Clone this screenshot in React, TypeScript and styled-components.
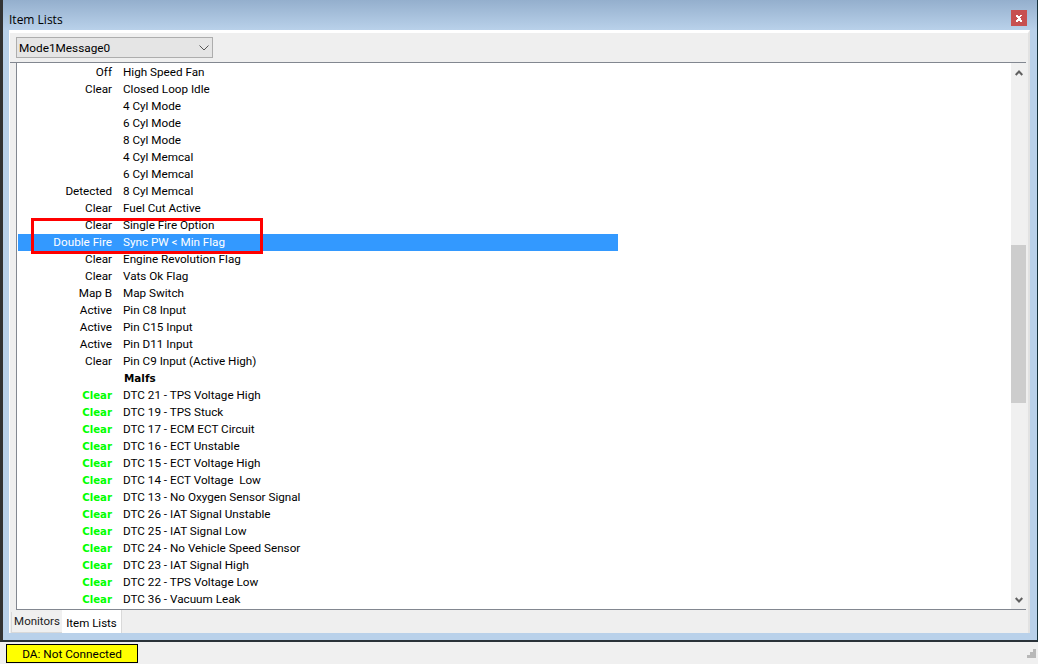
import React from "react";
import styled, { createGlobalStyle } from "styled-components";

const Global = createGlobalStyle`
  html, body { margin: 0; padding: 0; background: #f0f0f0; }
  body { font-family: Roboto, "Noto Sans", sans-serif; }
`;

const Screen = styled.div`
  width: 1038px; height: 664px; display: flex; flex-direction: column; overflow: hidden; position: relative;
`;
const Frame = styled.div`
  height: 642px; flex: none; box-sizing: border-box; display: flex; flex-direction: column;
  border-left: 3px solid #333; border-right: 1px solid #14303a; border-bottom: 2px solid #2a3238;
  background: #b9d1ea;
`;
const TitleBar = styled.div`
  height: 30px; flex: none; box-sizing: border-box; display: flex; align-items: center; justify-content: space-between;
  padding: 0 10px 0 6px; background: linear-gradient(#94afcd, #b9d1ea);
  font-family: "Open Sans", sans-serif; font-size: 12px; color: #000;
`;
const TitleText = styled.span`
  padding-top: 8px;
`;
const CloseButton = styled.div`
  width: 16px; height: 16px; margin-top: 6px; background: #c75050; display: flex;
  align-items: center; justify-content: center;
`;
const Panel = styled.div`
  flex: 1; margin: 0 7px 7px 6px; display: flex; flex-direction: column; min-height: 0;
  background: #efefef; border-top: 3px solid #fff; border-left: 1px solid #fff; border-right: 2px solid #e2e2e2;
`;
const Toolbar = styled.div`
  height: 30px; flex: none; box-sizing: border-box; padding: 4px 0 0 6px; border-bottom: 1px solid #828790;
  margin-right: 2px;
`;
const Combo = styled.div`
  width: 197px; height: 21px; box-sizing: border-box; border: 1px solid #adadad; background: #e5e5e5;
  display: flex; align-items: center; justify-content: space-between; padding: 0 3px 0 2px;
  font-size: 11.8px; color: #000;
`;
const ListArea = styled.div`
  height: 547px; flex: none; margin: 0 2px 0 6px; display: flex; background: #fff;
  border-left: 1px solid #828790; border-bottom: 1px solid #828790; box-sizing: border-box;
`;
const Rows = styled.div`
  flex: 1; padding-top: 1px; overflow: hidden; min-width: 0;
`;
const Row = styled.div<{ $selected?: boolean }>`
  width: 600px; height: 17px; margin-left: 1px; display: grid; grid-template-columns: 94px 1fr; column-gap: 11px;
  align-items: center; font-size: 11.7px; line-height: 17px; white-space: pre;
  background: ${(p) => (p.$selected ? "#3399ff" : "transparent")};
  color: ${(p) => (p.$selected ? "#fff" : "#000")};
`;
const Value = styled.span<{ $alarm?: boolean }>`
  text-align: right;
  ${(p) => p.$alarm ? `font-family: "DejaVu Sans", sans-serif; font-weight: 700; font-size: 10.2px; color: #00ff00;` : ""}
`;
const Label = styled.span<{ $heading?: boolean }>`
  ${(p) => p.$heading ? `font-family: "DejaVu Sans", sans-serif; font-weight: 700; font-size: 10.4px; padding-left: 1px;` : ""}
`;
const Highlight = styled.div`
  position: absolute; left: 31px; top: 218px; width: 232px; height: 36px; box-sizing: border-box;
  border: 3px solid #f00; pointer-events: none;
`;
const Scrollbar = styled.div`
  width: 15px; flex: none; background: #f0f0f0; display: flex; flex-direction: column; align-items: center;
`;
const ArrowSlot = styled.div`
  height: 19px; width: 100%; flex: none; box-sizing: border-box; display: flex; align-items: center; justify-content: center; padding-top: 1px;
`;
const Track = styled.div`
  flex: 1; width: 100%; padding: 163px 0 187px; display: flex; box-sizing: border-box; min-height: 0;
`;
const Thumb = styled.div`
  width: 100%; background: #cdcdcd;
`;
const Tabs = styled.div`
  flex: 1; display: flex; align-items: flex-start; padding-left: 1px; min-height: 0;
`;
const Tab = styled.div<{ $active?: boolean }>`
  font-size: 11.5px; text-align: center; box-sizing: border-box; flex: none;
  ${(p) => p.$active
    ? `width: 60px; height: 23px; background: #fff; line-height: 26px; color: #000; border-right: 1px solid #d9d9d9;`
    : `width: 51px; height: 21px; margin-top: 2px; background: #f0f0f0; line-height: 18px; border: 1px solid #d9d9d9; border-top: 0; border-right: 0; color: #222;`}
`;
const StatusBar = styled.div`
  height: 22px; flex: none; display: flex; align-items: center; justify-content: space-between;
  padding: 0 2px 0 6px; background: #f0f0f0;
`;
const Connection = styled.div`
  width: 132px; height: 19px; box-sizing: border-box; border: 1px solid #000; background: #ffff00;
  font-size: 11.8px; line-height: 19px; text-align: center; color: #000;
`;

const rows: [string, string][] = [
  ["Off", "High Speed Fan"],
  ["Clear", "Closed Loop Idle"],
  ["", "4 Cyl Mode"],
  ["", "6 Cyl Mode"],
  ["", "8 Cyl Mode"],
  ["", "4 Cyl Memcal"],
  ["", "6 Cyl Memcal"],
  ["Detected", "8 Cyl Memcal"],
  ["Clear", "Fuel Cut Active"],
  ["Clear", "Single Fire Option"],
  ["Double Fire", "Sync PW < Min Flag"],
  ["Clear", "Engine Revolution Flag"],
  ["Clear", "Vats Ok Flag"],
  ["Map B", "Map Switch"],
  ["Active", "Pin C8 Input"],
  ["Active", "Pin C15 Input"],
  ["Active", "Pin D11 Input"],
  ["Clear", "Pin C9 Input (Active High)"],
];
const malfs = [
  "DTC 21 - TPS Voltage High",
  "DTC 19 - TPS Stuck",
  "DTC 17 - ECM ECT Circuit",
  "DTC 16 - ECT Unstable",
  "DTC 15 - ECT Voltage High",
  "DTC 14 - ECT Voltage  Low",
  "DTC 13 - No Oxygen Sensor Signal",
  "DTC 26 - IAT Signal Unstable",
  "DTC 25 - IAT Signal Low",
  "DTC 24 - No Vehicle Speed Sensor",
  "DTC 23 - IAT Signal High",
  "DTC 22 - TPS Voltage Low",
  "DTC 36 - Vacuum Leak",
];

export default function App() {
  return (
    <Screen>
      <Global />
      <Frame>
        <TitleBar>
          <TitleText>Item Lists</TitleText>
          <CloseButton>
            <svg width="8" height="7" viewBox="0 0 8 7" shapeRendering="crispEdges"><path d="M1 0h2v1h2V0h2v1h-1v1H5v1h1v1h0v1h1v2H5V6H3v1H1V5h1V4h1V3H2V2H1z" fill="#fff" /></svg>
          </CloseButton>
        </TitleBar>
        <Panel>
          <Toolbar>
            <Combo>
              <span>Mode1Message0</span>
              <svg width="10" height="6" viewBox="0 0 10 6"><path d="M.5.5 5 5 9.500.5" fill="none" stroke="#555" /></svg>
            </Combo>
          </Toolbar>
          <ListArea>
            <Rows>
              {rows.map(([v, l]) => (
                <Row key={l} $selected={l.startsWith("Sync")}><Value>{v}</Value><Label>{l}</Label></Row>
              ))}
              <Row><Value /><Label $heading>Malfs</Label></Row>
              {malfs.map((l) => (
                <Row key={l}><Value $alarm>Clear</Value><Label>{l}</Label></Row>
              ))}
            </Rows>
            <Scrollbar>
              <ArrowSlot>
                <svg width="8" height="6" viewBox="0 0 8 6"><path d="M.7 5 4 1.500 7.300 5" fill="none" stroke="#606060" strokeWidth="2" /></svg>
              </ArrowSlot>
              <Track><Thumb /></Track>
              <ArrowSlot>
                <svg width="8" height="6" viewBox="0 0 8 6"><path d="M.7 1 4 4.500 7.300 1" fill="none" stroke="#606060" strokeWidth="2" /></svg>
              </ArrowSlot>
            </Scrollbar>
          </ListArea>
          <Tabs>
            <Tab>Monitors</Tab>
            <Tab $active>Item Lists</Tab>
          </Tabs>
        </Panel>
      </Frame>
      <StatusBar>
        <Connection>DA: Not Connected</Connection>
        <svg width="9" height="9" viewBox="0 0 9 9" fill="#b8b8b8" shapeRendering="crispEdges"><path d="M6 0h3v3H6zM3 3h3v3H3zM6 3h3v3H6zM0 6h3v3H0zM3 6h3v3H3zM6 6h3v3H6z" /></svg>
      </StatusBar>
      <Highlight />
    </Screen>
  );
}
